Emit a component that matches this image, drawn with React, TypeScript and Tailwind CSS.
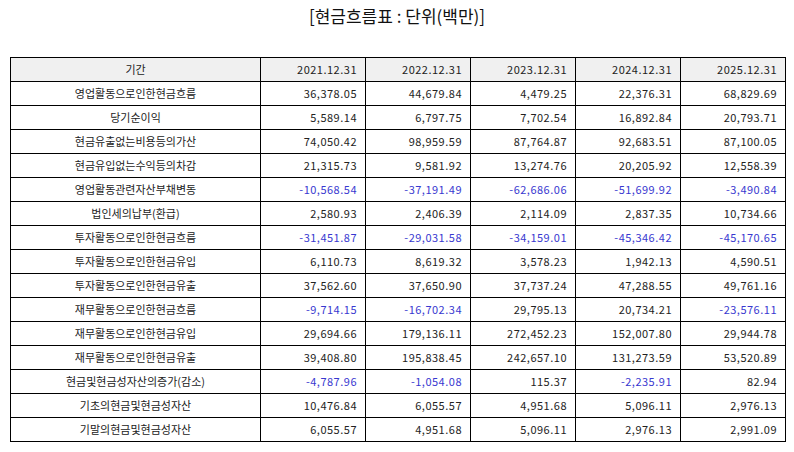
const years = ['2021.12.31', '2022.12.31', '2023.12.31', '2024.12.31', '2025.12.31'];

const rows: [string, string[]][] = [
  ['영업활동으로인한현금흐름', ['36,378.05', '44,679.84', '4,479.25', '22,376.31', '68,829.69']],
  ['당기순이익', ['5,589.14', '6,797.75', '7,702.54', '16,892.84', '20,793.71']],
  ['현금유출없는비용등의가산', ['74,050.42', '98,959.59', '87,764.87', '92,683.51', '87,100.05']],
  ['현금유입없는수익등의차감', ['21,315.73', '9,581.92', '13,274.76', '20,205.92', '12,558.39']],
  ['영업활동관련자산부채변동', ['-10,568.54', '-37,191.49', '-62,686.06', '-51,699.92', '-3,490.84']],
  ['법인세의납부(환급)', ['2,580.93', '2,406.39', '2,114.09', '2,837.35', '10,734.66']],
  ['투자활동으로인한현금흐름', ['-31,451.87', '-29,031.58', '-34,159.01', '-45,346.42', '-45,170.65']],
  ['투자활동으로인한현금유입', ['6,110.73', '8,619.32', '3,578.23', '1,942.13', '4,590.51']],
  ['투자활동으로인한현금유출', ['37,562.60', '37,650.90', '37,737.24', '47,288.55', '49,761.16']],
  ['재무활동으로인한현금흐름', ['-9,714.15', '-16,702.34', '29,795.13', '20,734.21', '-23,576.11']],
  ['재무활동으로인한현금유입', ['29,694.66', '179,136.11', '272,452.23', '152,007.80', '29,944.78']],
  ['재무활동으로인한현금유출', ['39,408.80', '195,838.45', '242,657.10', '131,273.59', '53,520.89']],
  ['현금및현금성자산의증가(감소)', ['-4,787.96', '-1,054.08', '115.37', '-2,235.91', '82.94']],
  ['기초의현금및현금성자산', ['10,476.84', '6,055.57', '4,951.68', '5,096.11', '2,976.13']],
  ['기말의현금및현금성자산', ['6,055.57', '4,951.68', '5,096.11', '2,976.13', '2,991.09']],
];

const font = { fontFamily: '"Noto Sans CJK KR", "Noto Sans", sans-serif' };

export default function App() {
  return (
    <div className="w-[794px] h-[452px] bg-white text-[#222]" style={font}>
      <h1 className="h-[57px] pt-[4px] text-center text-[17px] leading-[24px] font-normal text-[#111]">
        [현금흐름표 : 단위(백만)]
      </h1>
      <table className="ml-[10px] w-[775px] border-collapse table-fixed text-[11px]">
        <colgroup>
          <col className="w-[250px]" />
          {years.map((y) => (
            <col key={y} className="w-[105px]" />
          ))}
        </colgroup>
        <thead>
          <tr className="h-[24px] bg-[#f0f0f0]">
            <th className="border border-black font-normal text-center">기간</th>
            {years.map((y) => (
              <th key={y} className="border border-black font-normal text-right pr-[8px] tracking-[0.5px]">
                {y}
              </th>
            ))}
          </tr>
        </thead>
        <tbody>
          {rows.map(([label, vals]) => (
            <tr key={label} className="h-[24px]">
              <td className="border border-black text-center leading-none">{label}</td>
              {vals.map((v, i) => (
                <td
                  key={i}
                  className={`border border-black text-right pr-[8px] leading-none tracking-[0.5px] ${
                    v.startsWith('-') ? 'text-[#3838d0]' : ''
                  }`}
                >
                  {v}
                </td>
              ))}
            </tr>
          ))}
        </tbody>
      </table>
    </div>
  );
}
